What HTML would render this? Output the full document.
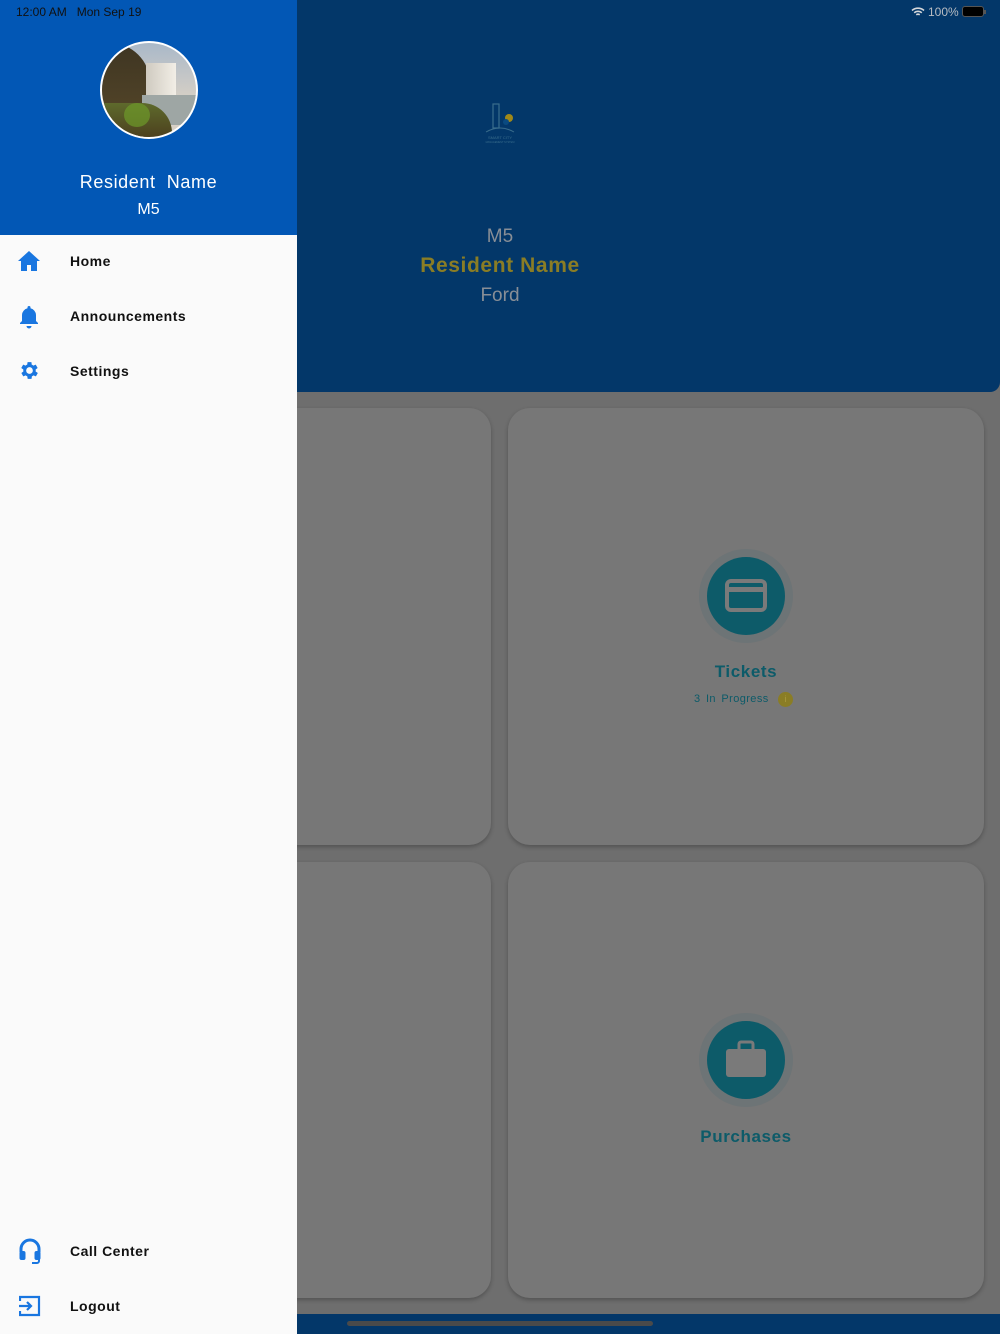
<!DOCTYPE html>
<html><head><meta charset="utf-8"><style>
*{margin:0;padding:0;box-sizing:border-box}
body{width:1000px;height:1334px;position:relative;overflow:hidden;background:#6e6e6e;font-family:"Liberation Sans",sans-serif}
.hdr{position:absolute;left:0;top:0;width:1000px;height:392px;background:#033769;border-bottom-right-radius:10px}
.card{position:absolute;background:#777;border-radius:22px;box-shadow:0 2px 4px rgba(0,0,0,.25)}
.circ{position:absolute;width:94px;height:94px;border-radius:50%;background:#6d7476}
.circ .in{position:absolute;left:8px;top:8px;width:78px;height:78px;border-radius:50%;background:#0d5b69}
.bar{position:absolute;left:0;top:1314px;width:1000px;height:20px;background:#033769}
.drawer{position:absolute;left:0;top:0;width:297px;height:1334px;background:#fafafa}
.dh{position:absolute;left:0;top:0;width:297px;height:235px;background:#0257b5}
.item{position:absolute;left:70px;font-size:14px;font-weight:bold;color:#111;letter-spacing:.5px}
.ic{position:absolute;left:18px}
</style></head><body>
<div class="hdr"></div>
<div style="position:absolute;right:14px;top:5px;font-size:12px;color:#b8bcc2">
<svg width="14" height="10" viewBox="0 0 14 10" style="vertical-align:-1px"><path d="M1 3.5a9 9 0 0 1 12 0M3.2 5.7a6 6 0 0 1 7.6 0M5.3 7.8a3 3 0 0 1 3.4 0" stroke="#d6d8db" stroke-width="1.6" fill="none"/></svg> 100% <span style="display:inline-block;width:22px;height:11px;border:1px solid #555;border-radius:3px;vertical-align:-1px;padding:1px;background:#000"></span><span style="display:inline-block;width:2px;height:4px;background:#555;vertical-align:2px"></span></div>
<svg style="position:absolute;left:481px;top:102px" width="38" height="42" viewBox="0 0 38 42"><rect x="12" y="2" width="6" height="24" fill="none" stroke="#3a6d8c" stroke-width="1.2"/><circle cx="28" cy="16" r="4" fill="#a08818"/><circle cx="25" cy="20" r="3" fill="#0a4a80"/><path d="M5 30q14-8 28 0" stroke="#3a6d8c" fill="none"/><text x="19" y="37" font-size="4" fill="#3a6d8c" text-anchor="middle">SMART CITY</text><text x="19" y="41" font-size="2.5" fill="#3a6d8c" text-anchor="middle">MANAGEMENT SYSTEM</text></svg>
<div style="position:absolute;left:300px;width:400px;top:226px;text-align:center;color:#888e96;font-size:19px">M5</div>
<div style="position:absolute;left:300px;width:400px;top:254px;text-align:center;color:#8a7d25;font-size:21px;font-weight:bold;letter-spacing:.6px">Resident Name</div>
<div style="position:absolute;left:300px;width:400px;top:285px;text-align:center;color:#888e96;font-size:19px">Ford</div>

<div class="card" style="left:270px;top:408px;width:221px;height:437px"></div>
<div class="card" style="left:508px;top:408px;width:476px;height:437px"></div>
<div class="card" style="left:270px;top:862px;width:221px;height:436px"></div>
<div class="card" style="left:508px;top:862px;width:476px;height:436px"></div>

<div class="circ" style="left:699px;top:549px"><div class="in"><svg width="78" height="78" viewBox="0 0 78 78"><rect x="20" y="24" width="38" height="29" rx="4" fill="none" stroke="#7a7a7a" stroke-width="4"/><rect x="20" y="30" width="38" height="5" fill="#7a7a7a"/></svg></div></div>
<div style="position:absolute;left:508px;width:476px;top:662px;text-align:center;color:#0d5b69;font-size:17px;font-weight:bold;letter-spacing:.6px">Tickets</div>
<div style="position:absolute;left:694px;top:693px;color:#0d5b69;font-size:11px;letter-spacing:.4px;word-spacing:2px">3 In Progress</div>
<div style="position:absolute;left:778px;top:692px;width:15px;height:15px;border-radius:50%;background:#8a7d25;color:#a89a40;font-size:9px;text-align:center;line-height:15px">i</div>

<div class="circ" style="left:699px;top:1013px"><div class="in"><svg width="78" height="78" viewBox="0 0 78 78"><rect x="19" y="28" width="40" height="28" rx="3" fill="#7a7a7a"/><rect x="32" y="21" width="14" height="9" rx="2" fill="none" stroke="#7a7a7a" stroke-width="3"/></svg></div></div>
<div style="position:absolute;left:508px;width:476px;top:1127px;text-align:center;color:#0d5b69;font-size:17px;font-weight:bold;letter-spacing:.6px">Purchases</div>

<div class="bar"><div style="position:absolute;left:347px;top:7px;width:306px;height:5px;border-radius:3px;background:#4a4a4a"></div></div>

<div class="drawer">
<div class="dh">
<div style="position:absolute;left:16px;top:5px;font-size:12px;color:#111">12:00 AM&nbsp;&nbsp;&nbsp;Mon Sep 19</div>
<div style="position:absolute;left:100px;top:41px;width:98px;height:98px;border-radius:50%;border:2px solid #fff;overflow:hidden;background:linear-gradient(180deg,#a9b8c8 0%,#d7d0c6 60%)">
<div style="position:absolute;left:0;top:0;width:48px;height:100px;background:linear-gradient(180deg,#3e3522,#5a4a2a);border-radius:0 40px 0 0"></div>
<div style="position:absolute;left:44px;top:20px;width:30px;height:38px;background:linear-gradient(90deg,#cfcac0,#f2eee6)"></div>
<div style="position:absolute;left:40px;top:52px;width:60px;height:30px;background:#9ea6a4"></div>
<div style="position:absolute;left:0;top:60px;width:70px;height:40px;background:linear-gradient(180deg,#5e6a2c,#4a3a1c);border-radius:0 30px 0 0"></div>
<div style="position:absolute;left:22px;top:60px;width:26px;height:24px;background:#6e9a2a;border-radius:50%;opacity:.7"></div>
</div>
<div style="position:absolute;left:0;width:297px;top:172px;text-align:center;color:#fff;font-size:18px;letter-spacing:.6px">Resident&nbsp; Name</div>
<div style="position:absolute;left:0;width:297px;top:201px;text-align:center;color:#fff;font-size:16px">M5</div>
</div>
<svg class="ic" style="top:251px" width="22" height="20" viewBox="0 0 22 20"><path d="M11 0L0 10h3v10h6v-6h4v6h6V10h3z" fill="#1976e0"/></svg>
<div class="item" style="top:253px">Home</div>
<svg class="ic" style="top:305px;left:19px" width="20" height="24" viewBox="0 0 20 24"><path d="M10 1a1.5 1.5 0 0 1 1.5 1.5v.8A7 7 0 0 1 17 10v6l2 2v1H1v-1l2-2v-6a7 7 0 0 1 5.5-6.7v-.8A1.5 1.5 0 0 1 10 1zM7.5 21h5a2.5 2.5 0 0 1-5 0z" fill="#1976e0"/></svg>
<div class="item" style="top:308px">Announcements</div>
<svg class="ic" style="top:359px" width="23" height="23" viewBox="0 0 24 24"><path fill="#1976e0" d="M19.4 13a7.5 7.5 0 0 0 0-2l2.1-1.6-2-3.5-2.5 1a7.6 7.6 0 0 0-1.7-1L15 3.2h-4l-.4 2.7a7.6 7.6 0 0 0-1.7 1l-2.5-1-2 3.5L6.6 11a7.5 7.5 0 0 0 0 2l-2.1 1.6 2 3.5 2.5-1a7.6 7.6 0 0 0 1.7 1l.4 2.7h4l.4-2.7a7.6 7.6 0 0 0 1.7-1l2.5 1 2-3.5zM13 15.5a3.5 3.5 0 1 1 0-7 3.5 3.5 0 0 1 0 7z" transform="translate(-1 0)"/></svg>
<div class="item" style="top:363px">Settings</div>
<svg class="ic" style="top:1238px;left:18px" width="24" height="26" viewBox="0 0 24 26"><path d="M3 14v-3a9 9 0 0 1 18 0v3" stroke="#1976e0" stroke-width="3" fill="none"/><rect x="1.5" y="13" width="6" height="9" rx="2" fill="#1976e0"/><rect x="16.5" y="13" width="6" height="9" rx="2" fill="#1976e0"/><path d="M21 21v2a2 2 0 0 1-2 2h-5" stroke="#1976e0" stroke-width="2" fill="none"/></svg>
<div class="item" style="top:1243px">Call Center</div>
<svg class="ic" style="top:1295px;left:19px" width="22" height="22" viewBox="0 0 22 22"><path d="M1 6V2h19v18H1v-4" stroke="#1976e0" stroke-width="2.2" fill="none"/><path d="M0 11h12M8 7l4 4-4 4" stroke="#1976e0" stroke-width="2.2" fill="none"/></svg>
<div class="item" style="top:1298px">Logout</div>
</div>
</body></html>
